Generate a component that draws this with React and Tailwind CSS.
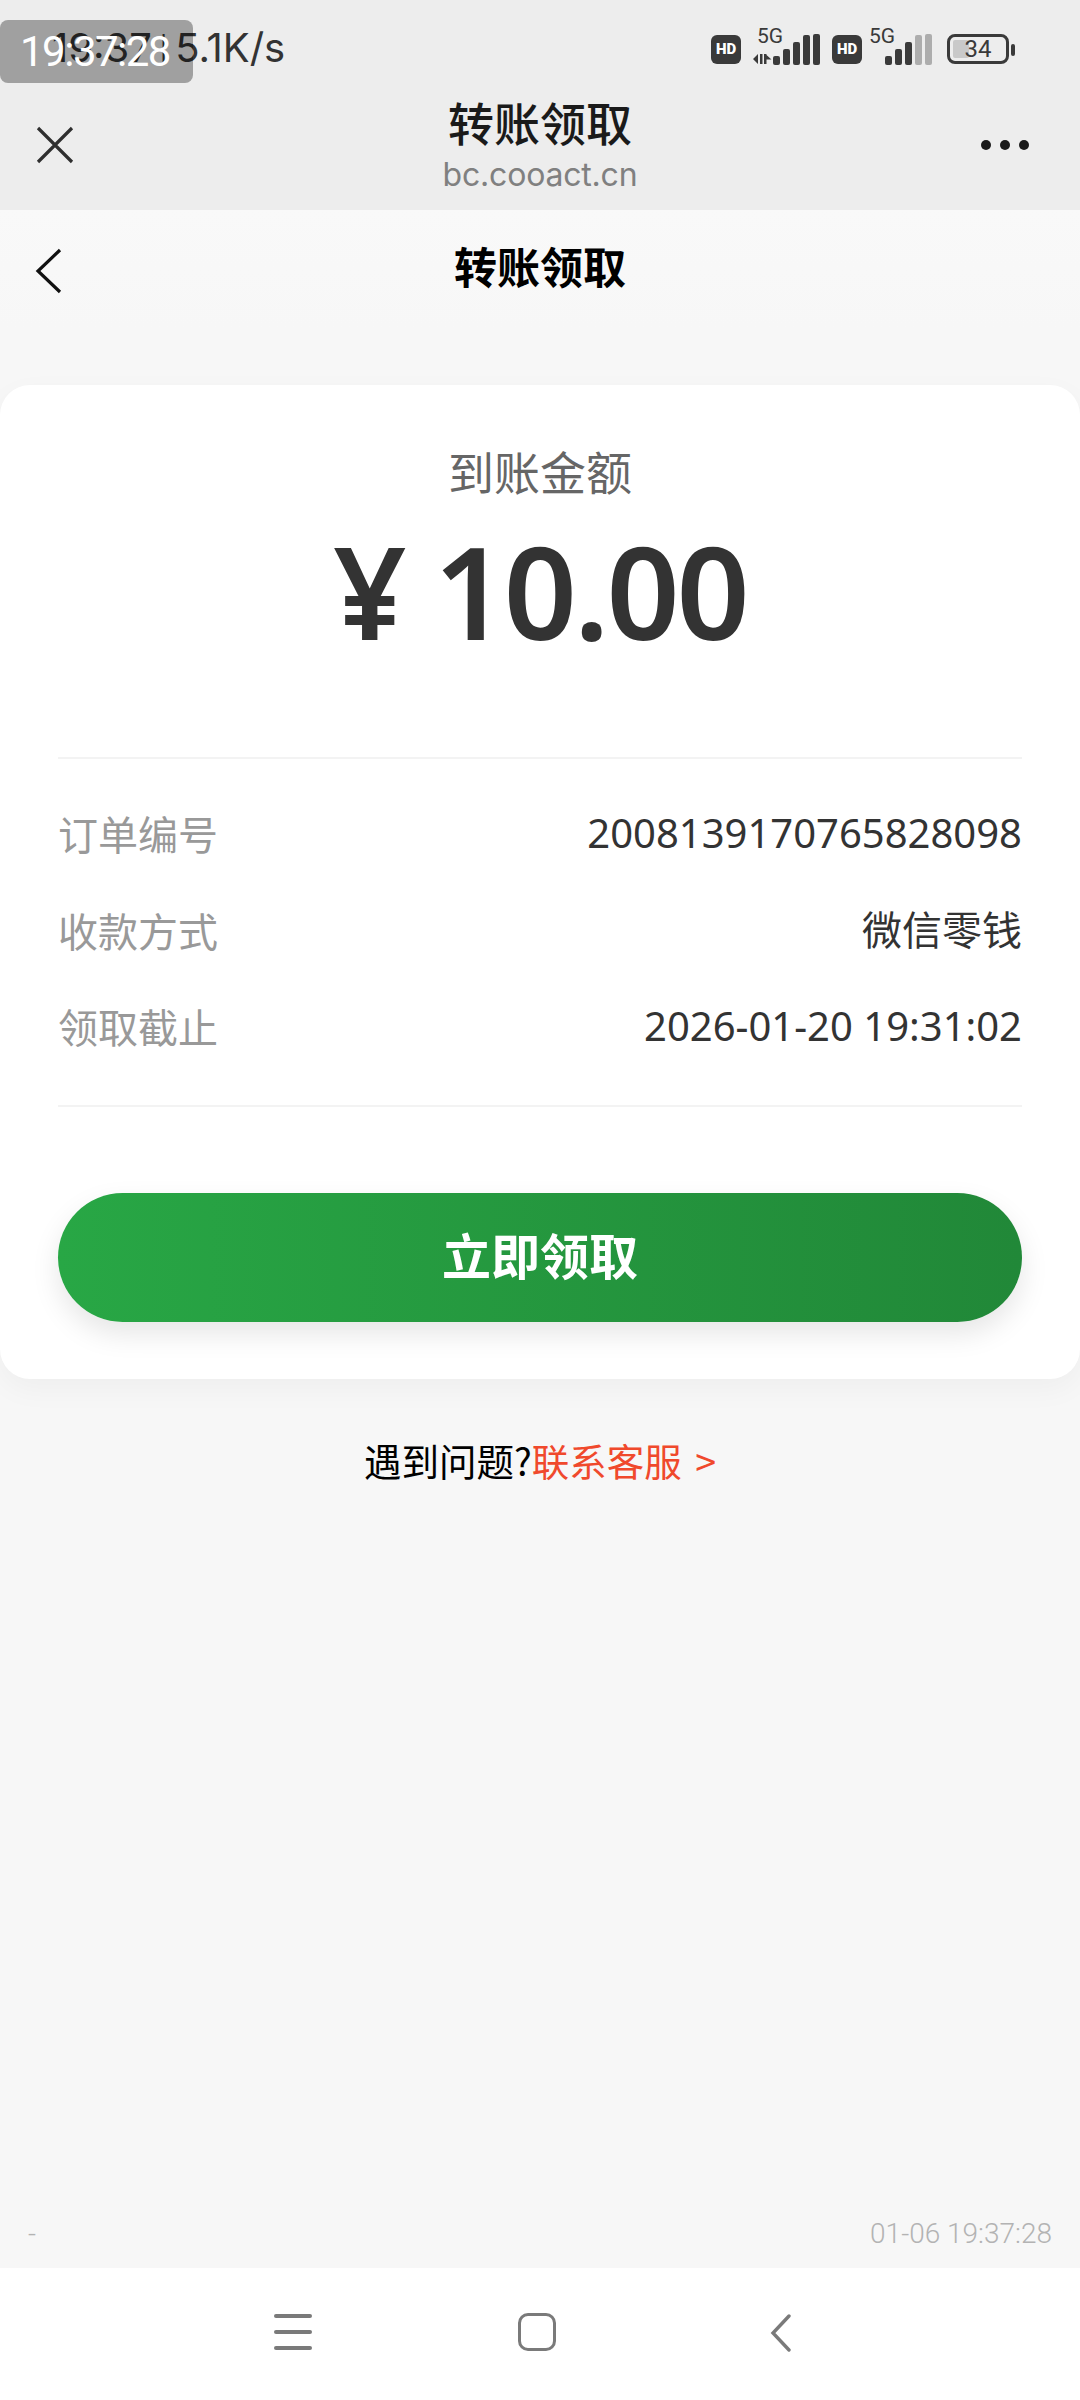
const cjk = { fontFamily: '"Noto Sans CJK SC", "Noto Sans", sans-serif' };

function Bars({ dim = 0 }) {
  const all = [9, 16, 23, 30, 31];
  return (
    <svg width="47" height="32" viewBox="0 0 47 32" fill="none" className="block">
      {all.map((h, i) => (
        <rect key={i} x={i * 10} y={32 - h} width="7" height={h} rx="2" fill={i >= all.length - dim ? "#adadad" : "#3a3a3a"} />
      ))}
    </svg>
  );
}

function Hd() {
  return (
    <div className="w-[30px] h-[29px] mb-[1px] rounded-[6px] bg-[#3a3a3a] text-white text-[15px] font-black flex items-center justify-center leading-none" style={{ fontFamily: "Roboto, sans-serif" }}>
      HD
    </div>
  );
}

function Row({ label, value }) {
  return (
    <div className="flex justify-between items-center h-[96.5px]">
      <span className="text-[40px] leading-none text-[#999999]">{label}</span>
      <span className="text-[40px] leading-none text-[#333333]" style={{ fontFamily: '"Noto Sans", "Noto Sans CJK SC", sans-serif' }}>{value}</span>
    </div>
  );
}

export default function App() {
  return (
    <div className="relative w-[1080px] h-[2400px] flex flex-col bg-[#f7f7f7] overflow-hidden" style={cjk}>
      <div className="bg-[#ededed] h-[210px] shrink-0">
        <div className="h-[96px] flex justify-between items-center pl-[52px] pr-[65px]">
          <span className="text-[40px] leading-none text-[#333333] -mt-[1px] whitespace-pre" style={{ fontFamily: "Inter, sans-serif" }}>19:37<span className="text-[26px] align-[3px]"> | </span>5.1K/s</span>
          <div className="flex items-end h-[36px] mt-[-2px]">
            <Hd />
            <div className="ml-[12px] w-[20px] h-[36px] relative">
              <span className="absolute top-[-3px] left-[4px] text-[21px] leading-none text-[#3a3a3a]" style={{ fontFamily: "Roboto, sans-serif" }}>5G</span>
              <svg width="19" height="12" viewBox="0 0 19 12" className="absolute left-0 bottom-0"><path d="M0 6 L5 1 V11Z M7 1 h2.5 v10 h-2.5Z M11 1 h2.5 v10 h-2.5Z M13.5 2 l5 4.5 h-5Z" fill="#3a3a3a" /></svg>
            </div>
            <Bars />
            <div className="ml-[12px]"><Hd /></div>
            <div className="w-[23px] h-[36px] relative">
              <span className="absolute top-[-3px] left-[7px] text-[21px] leading-none text-[#3a3a3a]" style={{ fontFamily: "Roboto, sans-serif" }}>5G</span>
            </div>
            <Bars dim={2} />
            <div className="ml-[15px] w-[62px] h-[30px] rounded-[8px] border-[3px] border-[#3a3a3a] relative overflow-hidden flex items-center justify-center mb-[1px]">
              <div className="absolute left-[3px] top-[3px] bottom-[3px] w-[16px] bg-[#c9c9c9] rounded-[2px]"></div>
              <span className="relative text-[24px] leading-none text-[#3a3a3a]" style={{ fontFamily: "Roboto, sans-serif" }}>34</span>
            </div>
            <div className="ml-[2px] w-[4px] h-[12px] rounded-[2px] bg-[#3a3a3a] mb-[9px]"></div>
          </div>
        </div>
        <div className="flex items-center justify-between h-[96px] pl-[36px] pr-[51px] mt-[1px]">
          <div className="w-[120px]">
            <svg width="38" height="38" viewBox="0 0 38 38" fill="none" stroke="#2f2f2f" strokeWidth="3.2" className="block"><path d="M2 2 L36 36 M36 2 L2 36" /></svg>
          </div>
          <div className="flex flex-col items-center -mt-[4px]">
            <span className="text-[46px] leading-[60px] font-medium text-[#1a1a1a]">转账领取</span>
            <span className="text-[32px] leading-[40px] mt-[4px] text-[#808080] tracking-[-0.2px]" style={{ fontFamily: "Inter, sans-serif" }}>bc.cooact.cn</span>
          </div>
          <div className="w-[105px] flex justify-end gap-[9px]">
            <div className="w-[10px] h-[10px] rounded-full bg-[#1a1a1a]"></div>
            <div className="w-[10px] h-[10px] rounded-full bg-[#1a1a1a]"></div>
            <div className="w-[10px] h-[10px] rounded-full bg-[#1a1a1a]"></div>
          </div>
        </div>
      </div>

      <div className="h-[120px] shrink-0 bg-gradient-to-b from-[#f9f9f9] to-[#f7f7f7] flex items-center pl-[35px] relative">
        <svg width="28" height="46" viewBox="0 0 28 46" fill="none" stroke="#111111" strokeWidth="3.2" className="mt-[2px]"><path d="M25 2 L3 23 L25 44" /></svg>
        <span className="absolute left-0 right-0 text-center text-[43px] leading-none font-bold text-black -mt-[9px]">转账领取</span>
      </div>

      <div className="mt-[55px] h-[994px] shrink-0 bg-white rounded-[30px] shadow-[0_10px_30px_rgba(0,0,0,0.04)] px-[58px] flex flex-col">
        <div className="mt-[60px] text-center text-[46px] leading-[50px] text-[#666666]">到账金额</div>
        <div className="mt-[31px] text-center text-[128px] leading-[130px] font-semibold text-[#333333] tracking-[-3px]" style={{ fontFamily: '"Noto Sans", sans-serif' }}>¥ 10.00</div>
        <div className="mt-[101px] border-t-2 border-[#f3f3f3]"></div>
        <div className="mt-[26px]">
          <Row label="订单编号" value="2008139170765828098" />
          <Row label="收款方式" value="微信零钱" />
          <Row label="领取截止" value="2026-01-20 19:31:02" />
        </div>
        <div className="mt-[30px] border-t-2 border-[#f3f3f3]"></div>
        <div className="mt-[86px] h-[129px] rounded-full bg-gradient-to-r from-[#28a745] to-[#218838] shadow-[0_12px_28px_rgba(0,0,0,0.1)] flex items-center justify-center text-white text-[49px] font-bold leading-none pb-[8px]">
          立即领取
        </div>
      </div>

      <div className="mt-[59px] text-center text-[37.5px] leading-[44px] text-black">
        遇到问题?<span className="text-[#f0492c]">联系客服<span className="ml-[5px]"> &gt;</span></span>
      </div>

      <div className="mt-auto flex justify-between items-center px-[28px] pb-[16px] text-[28px] leading-[36px] text-[#b3b3b3] font-light" style={{ fontFamily: "Roboto, sans-serif" }}>
        <span>-</span>
        <span>01-06 19:37:28</span>
      </div>

      <div className="h-[132px] shrink-0 bg-white flex items-start pt-[46px] pl-[274px]">
        <div className="w-[38px] h-[36px] flex flex-col justify-between">
          <div className="h-[4px] rounded-full bg-[#7a7a7a]"></div>
          <div className="h-[4px] rounded-full bg-[#7a7a7a]"></div>
          <div className="h-[4px] rounded-full bg-[#7a7a7a]"></div>
        </div>
        <div className="ml-[206px] w-[38px] h-[38px] -mt-[1px] rounded-[10px] border-[3px] border-[#7a7a7a]"></div>
        <svg width="22" height="38" viewBox="0 0 22 38" fill="none" stroke="#7a7a7a" strokeWidth="3.4" strokeLinecap="round" className="ml-[214px]"><path d="M19 2 L3 19 L19 36" /></svg>
      </div>

      <div className="absolute left-0 top-[20px] w-[193px] h-[63px] rounded-[8px] bg-black/[0.325] flex items-center pl-[20px] text-[42px] leading-none text-white tracking-[-1.5px]" style={{ fontFamily: "Roboto, sans-serif" }}>
        19:37:28
      </div>
    </div>
  );
}
